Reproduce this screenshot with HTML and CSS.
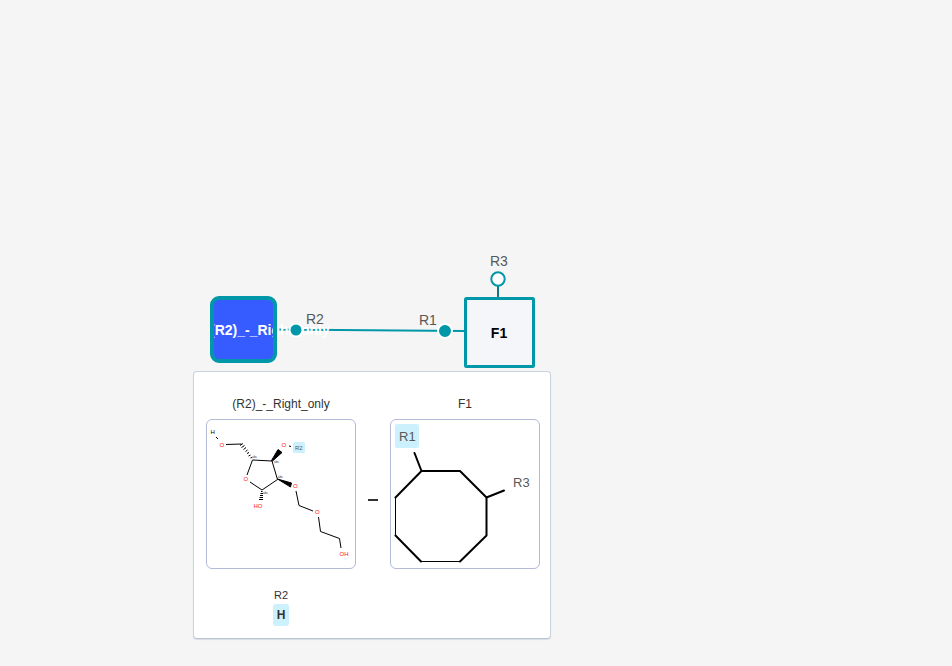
FILE: index.html
```
<!DOCTYPE html>
<html lang="en">
<head>
<meta charset="utf-8">
<title>Monomer connection</title>
<link rel="stylesheet" href="styles.css">
</head>
<body>
<main class="canvas">
  <svg class="graph" width="560" height="372" viewBox="0 0 560 372" role="img" aria-label="Monomer graph">
    <rect class="preset" x="212" y="298" width="63" height="63" rx="7"/>
    <path class="bond" d="M276 329.500L464 331"/>
    <text class="preset-name" x="210" y="335">(R2)_-_Right_only</text>
    <rect class="preset-outline" x="212" y="298" width="63" height="63" rx="7"/>
    <circle class="point" cx="296" cy="330" r="6.500"/>
    <circle class="point" cx="445" cy="331" r="7"/>
    <path class="bond stem" d="M498 286V298"/>
    <circle class="free-point" cx="498" cy="279" r="6.700"/>
    <rect class="chem" x="465.500" y="298.500" width="68" height="68" rx="1"/>
    <text class="chem-name" x="499" y="338">F1</text>
    <text class="label" x="306" y="324">R2</text>
    <text class="label" x="419" y="325">R1</text>
    <text class="label" x="490" y="266">R3</text>
  </svg>

  <section class="popup">
    <h2 class="name">(R2)_-_Right_only</h2>
    <h2 class="name name-right">F1</h2>
    <div class="card">
      <svg class="structure" viewBox="207 420 148 148" role="img" aria-label="(R2)_-_Right_only structure">
        <rect class="tag" x="293" y="442" width="12" height="11" rx="1.500"/>
        <g class="thin">
          <path d="M216 437L218 439M226 444.500L241.500 444M252.500 460L272 461L277.500 479.500L262 490L250 482M247 475L252.500 460M289 446L291 446.500M296 491L299 505.500L313 511M318.500 517L320.500 531.500L339.500 538.500L341 548"/>
        </g>
        <path class="wedge" d="M271.500 460.500L278 449.500L282 452.500L272.500 461Z"/>
        <path class="wedge" d="M277.500 479L291.500 483L290.500 487Z"/>
        <path class="hash" d="M240 445.500L243 443.500M241.500 447.500L244.500 445.500M243.500 449.500L246 447.500M245.500 451.500L247.500 450M247 453.500L249 452.500M248.500 456L250.500 455M250.500 458L252 457.500M261 491.500H262.500M260.500 493.500H263M260 495.500H263M259.500 497.500H263M259 499.500H263"/>
        <g class="atom">
          <text class="hydrogen" x="210.500" y="434">H</text>
          <text x="219.500" y="447">O</text>
          <text x="281.500" y="447">O</text>
          <text x="243.500" y="481">O</text>
          <text x="293" y="488">O</text>
          <text x="315" y="514">O</text>
          <text x="253.500" y="508">HO</text>
          <text x="339.500" y="556">OH</text>
          <text class="tag-text" x="295" y="450">R2</text>
        </g>
        <g class="stereo">
          <text x="252" y="458">abs</text>
          <text x="274" y="463">abs</text>
          <text x="278" y="478">abs</text>
          <text x="263" y="494">abs</text>
        </g>
      </svg>
    </div>
    <span class="dash"></span>
    <div class="card">
      <svg class="structure" viewBox="391 420 148 148" role="img" aria-label="F1 structure">
        <rect class="tag" x="395" y="424" width="24" height="24" rx="2"/>
        <path class="ring" d="M421.500 471H460L486.500 497.500V535.500L460 561.500M421 561.500L395.500 535.500M395.500 497.500L421.500 471L414.500 453M486.500 497.500L504 490.500"/>
        <path class="ring-edge" d="M395.500 497V536M421 561.500H460"/>
        <text class="group" x="399" y="441">R1</text>
        <text class="group" x="513" y="487">R3</text>
      </svg>
    </div>
    <div class="caps">
      <span class="cap-name">R2</span>
      <span class="cap">H</span>
    </div>
  </section>
</main>
</body>
</html>
```

FILE: styles.css
```
body {
  margin: 0;
  font-family: "Liberation Sans", Arial, sans-serif;
  color: #333;
  background: #f5f5f5;
}

.canvas {
  position: relative;
  min-height: 100vh;
  overflow: hidden;
}

.graph {
  display: block;
  font-size: 14px;
}

.preset { fill: #365cff; }
.preset-outline { fill: none; stroke: #0097a8; stroke-width: 4; }
.preset-name { fill: #fff; font-weight: 700; }
.bond { fill: none; stroke: #0097a8; stroke-width: 2; }
.stem { stroke: #167782; }
.point { fill: #0097a8; stroke: #fff; stroke-width: 2; }
.free-point { fill: #fff; stroke: #0097a8; stroke-width: 2; }
.chem { fill: #f5f6f9; stroke: #0097a8; stroke-width: 3; }
.chem-name { fill: #000; font-weight: 700; text-anchor: middle; }
.label { fill: #585858; }

/* Connection preview shown over the canvas */
.popup {
  position: absolute;
  left: 193px;
  top: 371px;
  display: grid;
  grid-template-columns: 150px 34px 150px;
  padding: 24px 10px 12px 12px;
  border: 1px solid #cad3dd;
  border-bottom-color: #bcc5d4;
  border-radius: 4px;
  background: #fff;
  box-shadow: 0 1px 1px #d8dde5;
}

.name {
  margin: 0 0 7px;
  font-size: 12px;
  font-weight: 400;
  line-height: 16px;
  text-align: center;
}

.name-right { grid-column: 3; }

.card {
  box-sizing: border-box;
  height: 150px;
  border: 1px solid #b4b9d9;
  border-radius: 6px;
}

.structure {
  display: block;
  width: 100%;
  height: 100%;
}

.dash {
  align-self: center;
  justify-self: center;
  width: 10px;
  height: 2px;
  margin-top: 12px;
  background: #333;
}

.caps {
  display: flex;
  flex-direction: column;
  align-items: center;
  gap: 2px;
  padding-top: 19px;
}

.cap-name {
  font-size: 11px;
  line-height: 14px;
}

.cap {
  padding: 0 4px;
  border-radius: 3px;
  background: #cdf1fc;
  font-size: 12px;
  font-weight: 700;
  line-height: 22px;
}

.tag { fill: #cdf1fc; }
.thin { fill: none; stroke: #000; stroke-width: 1; }
.wedge { fill: #000; stroke: #000; stroke-width: 1; }
.hash { stroke: #000; stroke-width: 1; }
.atom { font-size: 6px; fill: #ff0d0d; }
.atom .hydrogen { fill: #000; }
.atom .tag-text { fill: #585858; }
.stereo { font-size: 3px; fill: #333; }
.ring { fill: none; stroke: #000; stroke-width: 2; stroke-linecap: round; stroke-linejoin: round; }
.ring-edge { fill: none; stroke: #000; stroke-width: 1; }
.group { font-size: 13px; fill: #585858; }
```
